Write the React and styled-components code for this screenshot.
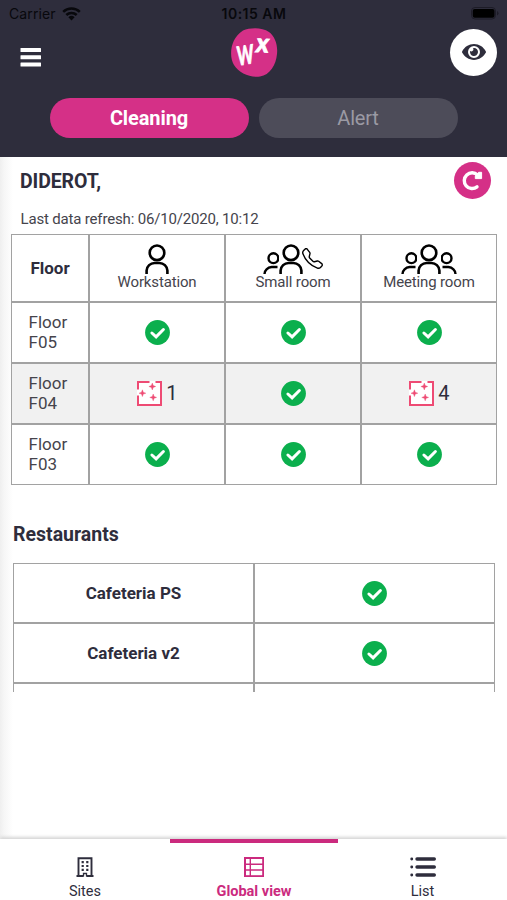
import React from 'react';
import styled, { createGlobalStyle } from 'styled-components';
import { FaEye } from 'react-icons/fa';
import { BsTelephone } from 'react-icons/bs';

const GlobalStyle = createGlobalStyle`
    * {
        box-sizing: border-box;
    }

    body {
        margin: 0;
        background: #FFFFFF;
        font-family: Roboto, sans-serif;
        color: #2E2D3C;
    }
`

const Screen = styled.div`
    width: 507px;
    height: 900px;
    display: flex;
    flex-direction: column;
    overflow: hidden;
    background: linear-gradient(to right, #EFEFEF 0, #F6F6F6 4px, #FFFFFF 13px);
`

const Header = styled.header`
    height: 157px;
    flex: none;
    display: flex;
    flex-direction: column;
    background: #2E2D3C;
`

const StatusBar = styled.div`
    height: 27px;
    padding: 0 8px 0 9px;
    display: grid;
    grid-template-columns: 1fr auto 1fr;
    align-items: center;
    font-family: Inter, sans-serif;
    font-size: 14px;
    color: #08080C;
`

const Carrier = styled.div`
    display: flex;
    align-items: center;
    gap: 6px;
    letter-spacing: 0.1px;
`

const Clock = styled.div`
    font-size: 14px;
    font-weight: 600;
    letter-spacing: 0.5px;
`

const BatterySlot = styled.div`
    display: flex;
    justify-content: flex-end;
`

const TopBar = styled.div`
    height: 50px;
    padding: 0 10px;
    display: grid;
    grid-template-columns: 1fr auto 1fr;
    align-items: center;
`

const MenuButton = styled.button`
    width: 22px;
    height: 20px;
    margin: 10px 0 0 10px;
    padding: 0;
    border: none;
    background: none;
`

const ViewButton = styled.button`
    width: 47px;
    height: 47px;
    padding: 0;
    justify-self: end;
    display: flex;
    align-items: center;
    justify-content: center;
    border: none;
    border-radius: 50%;
    background: #FFFFFF;
    color: #2E2D3C;
`

const Switcher = styled.div`
    display: flex;
    justify-content: center;
    gap: 10px;
    margin-top: 21px;
`

const SwitchButton = styled.button`
    width: 199px;
    height: 40px;
    padding: 0;
    border: none;
    border-radius: 20px;
    font-family: inherit;
    font-size: 20px;
    font-weight: ${({ $active }) => ($active ? 700 : 400)};
    letter-spacing: ${({ $active }) => ($active ? '-0.1px' : '-0.2px')};
    color: ${({ $active }) => ($active ? '#FFFFFF' : '#9B9AA4')};
    background: ${({ $active }) => ($active ? '#D53087' : '#4D4C59')};
`

const Content = styled.main`
    height: 535px;
    flex: none;
    overflow: hidden;
`

const TitleRow = styled.div`
    height: 47px;
    padding: 0 16px 0 20px;
    display: flex;
    align-items: center;
    justify-content: space-between;
`

const SiteName = styled.h1`
    margin: 0;
    padding-top: 1px;
    font-size: 19.5px;
    font-weight: 700;
    letter-spacing: -0.1px;
`

const RefreshButton = styled.button`
    width: 37px;
    height: 37px;
    padding: 0;
    border: none;
    border-radius: 50%;
    background: #D53087;
`

const RefreshDate = styled.div`
    height: 30px;
    padding: 5px 0 0 20.5px;
    font-size: 15px;
    letter-spacing: -0.17px;
    line-height: 20px;
    color: #45444C;
`

const FloorTable = styled.div`
    width: 486px;
    margin-left: 11px;
    display: grid;
    grid-template-columns: 78px repeat(3, 136px);
    grid-template-rows: 68px repeat(3, 61px);
`

const Cell = styled.div`
    display: flex;
    align-items: center;
    justify-content: center;
    gap: 4px;
    border: 1px solid #A2A2A2;
    font-size: 20px;
    background: ${({ $shaded }) => ($shaded ? '#F1F1F1' : '#FFFFFF')};
`

const Count = styled.span`
    font-size: 20px;
    line-height: 24px;
    padding-bottom: 1px;
    letter-spacing: -0.5px;
`

const FloorHeading = styled(Cell)`
    font-size: 17px;
    font-weight: 700;
`

const SpaceHeading = styled(Cell)`
    flex-direction: column;
    gap: 0;
    padding-bottom: 1px;
    font-size: 15px;
    letter-spacing: -0.15px;
    line-height: 17px;
    color: #45444C;
`

const FloorName = styled(Cell)`
    justify-content: flex-start;
    padding: 0 13px 1px 16.5px;
    font-size: 17px;
    line-height: 20px;
    color: #45444C;
`

const SectionTitle = styled.h2`
    margin: 38px 0 0 13px;
    height: 40px;
    font-size: 19.5px;
    line-height: 24px;
    font-weight: 700;
`

const RestaurantTable = styled.div`
    width: 482px;
    margin-left: 13px;
    display: grid;
    grid-template-columns: 241px 241px;
    grid-auto-rows: 60px;
`

const RestaurantName = styled(Cell)`
    font-size: 17px;
    font-weight: 700;
`

const TabBar = styled.nav`
    height: 61px;
    flex: none;
    margin-top: auto;
    display: grid;
    grid-template-columns: 170px 168px 169px;
    background: #FFFFFF;
    box-shadow: 0 -2px 3px #D6D6D6;
`

const Tab = styled.div`
    display: flex;
    flex-direction: column;
    align-items: center;
    padding-top: 14px;
    gap: 6px;
    border-top: 4px solid ${({ $active }) => ($active ? '#CB2A7E' : 'transparent')};
    font-size: 14.5px;
    line-height: 18px;
    font-weight: ${({ $active }) => ($active ? 700 : 400)};
    color: ${({ $active }) => ($active ? '#CB2A7E' : '#2E2D3C')};
`

const Drawing = styled.svg`
    display: block;
    flex: none;
`

function Wifi() {
    return (
        <Drawing width="19" height="14" viewBox="0 0 19 14" fill="none" stroke="currentColor" strokeWidth="2.5">
            <path d="M1.2 4.8a12 12 0 0 1 16.6 0" />
            <path d="M4.3 8a7.5 7.5 0 0 1 10.4 0" />
            <path d="M6.4 10.3a4.5 4.5 0 0 1 6.2 0L9.5 13.6z" fill="currentColor" stroke="none" />
        </Drawing>
    )
}

function Battery() {
    return (
        <Drawing width="28" height="13" viewBox="0 0 28 13">
            <rect x="0.5" y="0.5" width="24" height="11.5" rx="3.5" fill="none" stroke="#1D1C27" />
            <rect x="1.7" y="1.9" width="21.8" height="8.8" rx="2" fill="#000000" />
            <path d="M26 4v4.5q1.5-.7 1.5-2.25T26 4z" fill="#1D1C27" />
        </Drawing>
    )
}

function Logo() {
    return (
        <Drawing width="48" height="50" viewBox="0 0 48 50">
            <path d="M13 3.5C20 .5 32 0 39 5c6 4.500 9 13 8 22-1 11-7 21-17 22.500C20 51 9 46 4 38-1 30-.5 12 13 3.500z" fill="#D53087" />
            <g fill="#FFFFFF" stroke="#FFFFFF" strokeWidth="0.9" fontFamily="Lato, sans-serif" fontWeight="700" fontStyle="italic">
                <text fontSize="26" transform="translate(8.500 38.500) rotate(-9) scale(0.66 1)">W</text>
                <text fontSize="26" transform="translate(26 25) rotate(2)">x</text>
            </g>
        </Drawing>
    )
}

function Menu() {
    return (
        <Drawing width="22" height="20" viewBox="0 0 22 20" fill="#FFFFFF">
            <rect x="0.5" y="1" width="20.5" height="4" rx="0.5" />
            <rect x="0.5" y="8.3" width="20.5" height="4" rx="0.5" />
            <rect x="0.5" y="15.5" width="20.5" height="4" rx="0.5" />
        </Drawing>
    )
}

function Refresh() {
    return (
        <Drawing width="37" height="37" viewBox="0 0 37 37">
            <path d="M23 24.900a7.900 7.900 0 1 1 .6-12" fill="none" stroke="#FFFFFF" strokeWidth="3.4" strokeLinecap="round" />
            <path d="M24.600 10.300h3v6.300h-6.300v-2.600z" fill="#FFFFFF" stroke="#FFFFFF" strokeLinejoin="round" />
        </Drawing>
    )
}

function Check() {
    return (
        <Drawing width="25" height="25" viewBox="0 0 25 25">
            <circle cx="12.5" cy="12.5" r="12.4" fill="#0BAF4D" />
            <path d="M6.900 13l4.200 3.900 7.300-7.400" fill="none" stroke="#FFFFFF" strokeWidth="3" strokeLinecap="round" />
        </Drawing>
    )
}

function Sparkle({ x, y }) {
    return <path transform={`translate(${x} ${y})`} d="M0-3.400L.9-.9 3.400 0 .9.9 0 3.400-.9.900-3.400 0-.9-.9z" fill="#EE4B74" stroke="#EE4B74" strokeWidth="0.4" />
}

function ToClean() {
    return (
        <Drawing width="25" height="25" viewBox="0 0 25 25">
            <path d="M0 0h25v25H0z" fill="#FFFFFF" />
            <path d="M12.500 1H1v7.500M1 14.500V24h23V1h-5.500" fill="none" stroke="#EE4B74" strokeWidth="2" />
            <Sparkle x={15.3} y={5.5} />
            <Sparkle x={5.4} y={12.2} />
            <Sparkle x={16.2} y={16.4} />
        </Drawing>
    )
}

const People = styled.div`
    height: 30px;
    display: flex;
    align-items: flex-end;
    color: #000000;
`

const PhoneSlot = styled.div`
    align-self: flex-start;
    display: flex;
    margin: 4px 1px 0 -1px;
    stroke: #000000;
    stroke-width: 0.6px;
`

function Person() {
    return (
        <Drawing width="24" height="30" viewBox="0 0 24 30" fill="none" stroke="currentColor" strokeWidth="2.6">
            <circle cx="12" cy="8.8" r="7.3" />
            <path d="M1.600 30v-3.500a8 8 0 0 1 8-7.500h4.800a8 8 0 0 1 8 7.500V30" />
        </Drawing>
    )
}

function SidePerson({ flip }) {
    return (
        <Drawing width="16" height="22" viewBox="0 0 16 22" fill="none" stroke="currentColor" strokeWidth="2.4">
            <g transform={flip ? 'translate(16 0) scale(-1 1)' : undefined}>
                <circle cx="10.4" cy="6.2" r="4.9" />
                <path d="M1.500 22a8 7 0 0 1 7.200-7H14.500" />
            </g>
        </Drawing>
    )
}

function BuildingIcon() {
    return (
        <Drawing width="18" height="20" viewBox="0 0 18 20" fill="none" stroke="currentColor">
            <path d="M2.500 19V1.200h13V19M.5 19h7M10.500 19h7" strokeWidth="1.9" />
            <path d="M6.700 4v10M11.300 4v10" strokeWidth="2.2" strokeDasharray="2.200 1.700" />
            <path d="M7.500 19.500v-3h3v3" strokeWidth="1.3" />
        </Drawing>
    )
}

function TableIcon() {
    return (
        <Drawing width="20" height="20" viewBox="0 0 20 20" fill="none" stroke="currentColor">
            <rect x="1" y="1" width="18.2" height="18.2" strokeWidth="2" />
            <path d="M6.300 1v18M1 7.200h18M1 13h18" strokeWidth="1.4" />
        </Drawing>
    )
}

function ListIcon() {
    return (
        <Drawing width="26" height="20" viewBox="0 0 26 20" fill="none" stroke="currentColor" strokeWidth="3.4" strokeLinecap="round">
            <path d="M7 2h17.300M7 10h17.300M7 18h17.300" />
            <path d="M1.700 2h.1M1.700 10h.1M1.700 18h.1" strokeWidth="2.8" />
        </Drawing>
    )
}

// a number is how many places still have to be cleaned
const floors = [
    { name: 'Floor F05', places: [0, 0, 0] },
    { name: 'Floor F04', places: [1, 0, 4] },
    { name: 'Floor F03', places: [0, 0, 0] },
]

const restaurants = ['Cafeteria PS', 'Cafeteria v2', '']

function App() {
    return (
        <Screen>
            <GlobalStyle />
            <Header>
                <StatusBar>
                    <Carrier>Carrier <Wifi /></Carrier>
                    <Clock>10:15 AM</Clock>
                    <BatterySlot><Battery /></BatterySlot>
                </StatusBar>
                <TopBar>
                    <MenuButton aria-label="Menu"><Menu /></MenuButton>
                    <Logo />
                    <ViewButton aria-label="View"><FaEye size={24} /></ViewButton>
                </TopBar>
                <Switcher>
                    <SwitchButton $active>Cleaning</SwitchButton>
                    <SwitchButton>Alert</SwitchButton>
                </Switcher>
            </Header>
            <Content>
                <TitleRow>
                    <SiteName>DIDEROT,</SiteName>
                    <RefreshButton aria-label="Refresh"><Refresh /></RefreshButton>
                </TitleRow>
                <RefreshDate>Last data refresh: 06/10/2020, 10:12</RefreshDate>
                <FloorTable>
                    <FloorHeading>Floor</FloorHeading>
                    <SpaceHeading>
                        <People><Person /></People>
                        Workstation
                    </SpaceHeading>
                    <SpaceHeading>
                        <People>
                            <SidePerson />
                            <Person />
                            <PhoneSlot><BsTelephone size={21} /></PhoneSlot>
                        </People>
                        Small room
                    </SpaceHeading>
                    <SpaceHeading>
                        <People>
                            <SidePerson />
                            <Person />
                            <SidePerson flip />
                        </People>
                        Meeting room
                    </SpaceHeading>
                    {floors.map(({ name, places }, row) => (
                        <React.Fragment key={name}>
                            <FloorName $shaded={row % 2 === 1}>{name}</FloorName>
                            {places.map((count, key) => (
                                <Cell key={key} $shaded={row % 2 === 1}>
                                    {count ? <><ToClean /><Count>{count}</Count></> : <Check />}
                                </Cell>
                            ))}
                        </React.Fragment>
                    ))}
                </FloorTable>
                <SectionTitle>Restaurants</SectionTitle>
                <RestaurantTable>
                    {restaurants.map((name, key) => (
                        <React.Fragment key={key}>
                            <RestaurantName>{name}</RestaurantName>
                            <Cell>{name && <Check />}</Cell>
                        </React.Fragment>
                    ))}
                </RestaurantTable>
            </Content>
            <TabBar>
                <Tab><BuildingIcon />Sites</Tab>
                <Tab $active><TableIcon />Global view</Tab>
                <Tab><ListIcon />List</Tab>
            </TabBar>
        </Screen>
    );
}

export default App;
